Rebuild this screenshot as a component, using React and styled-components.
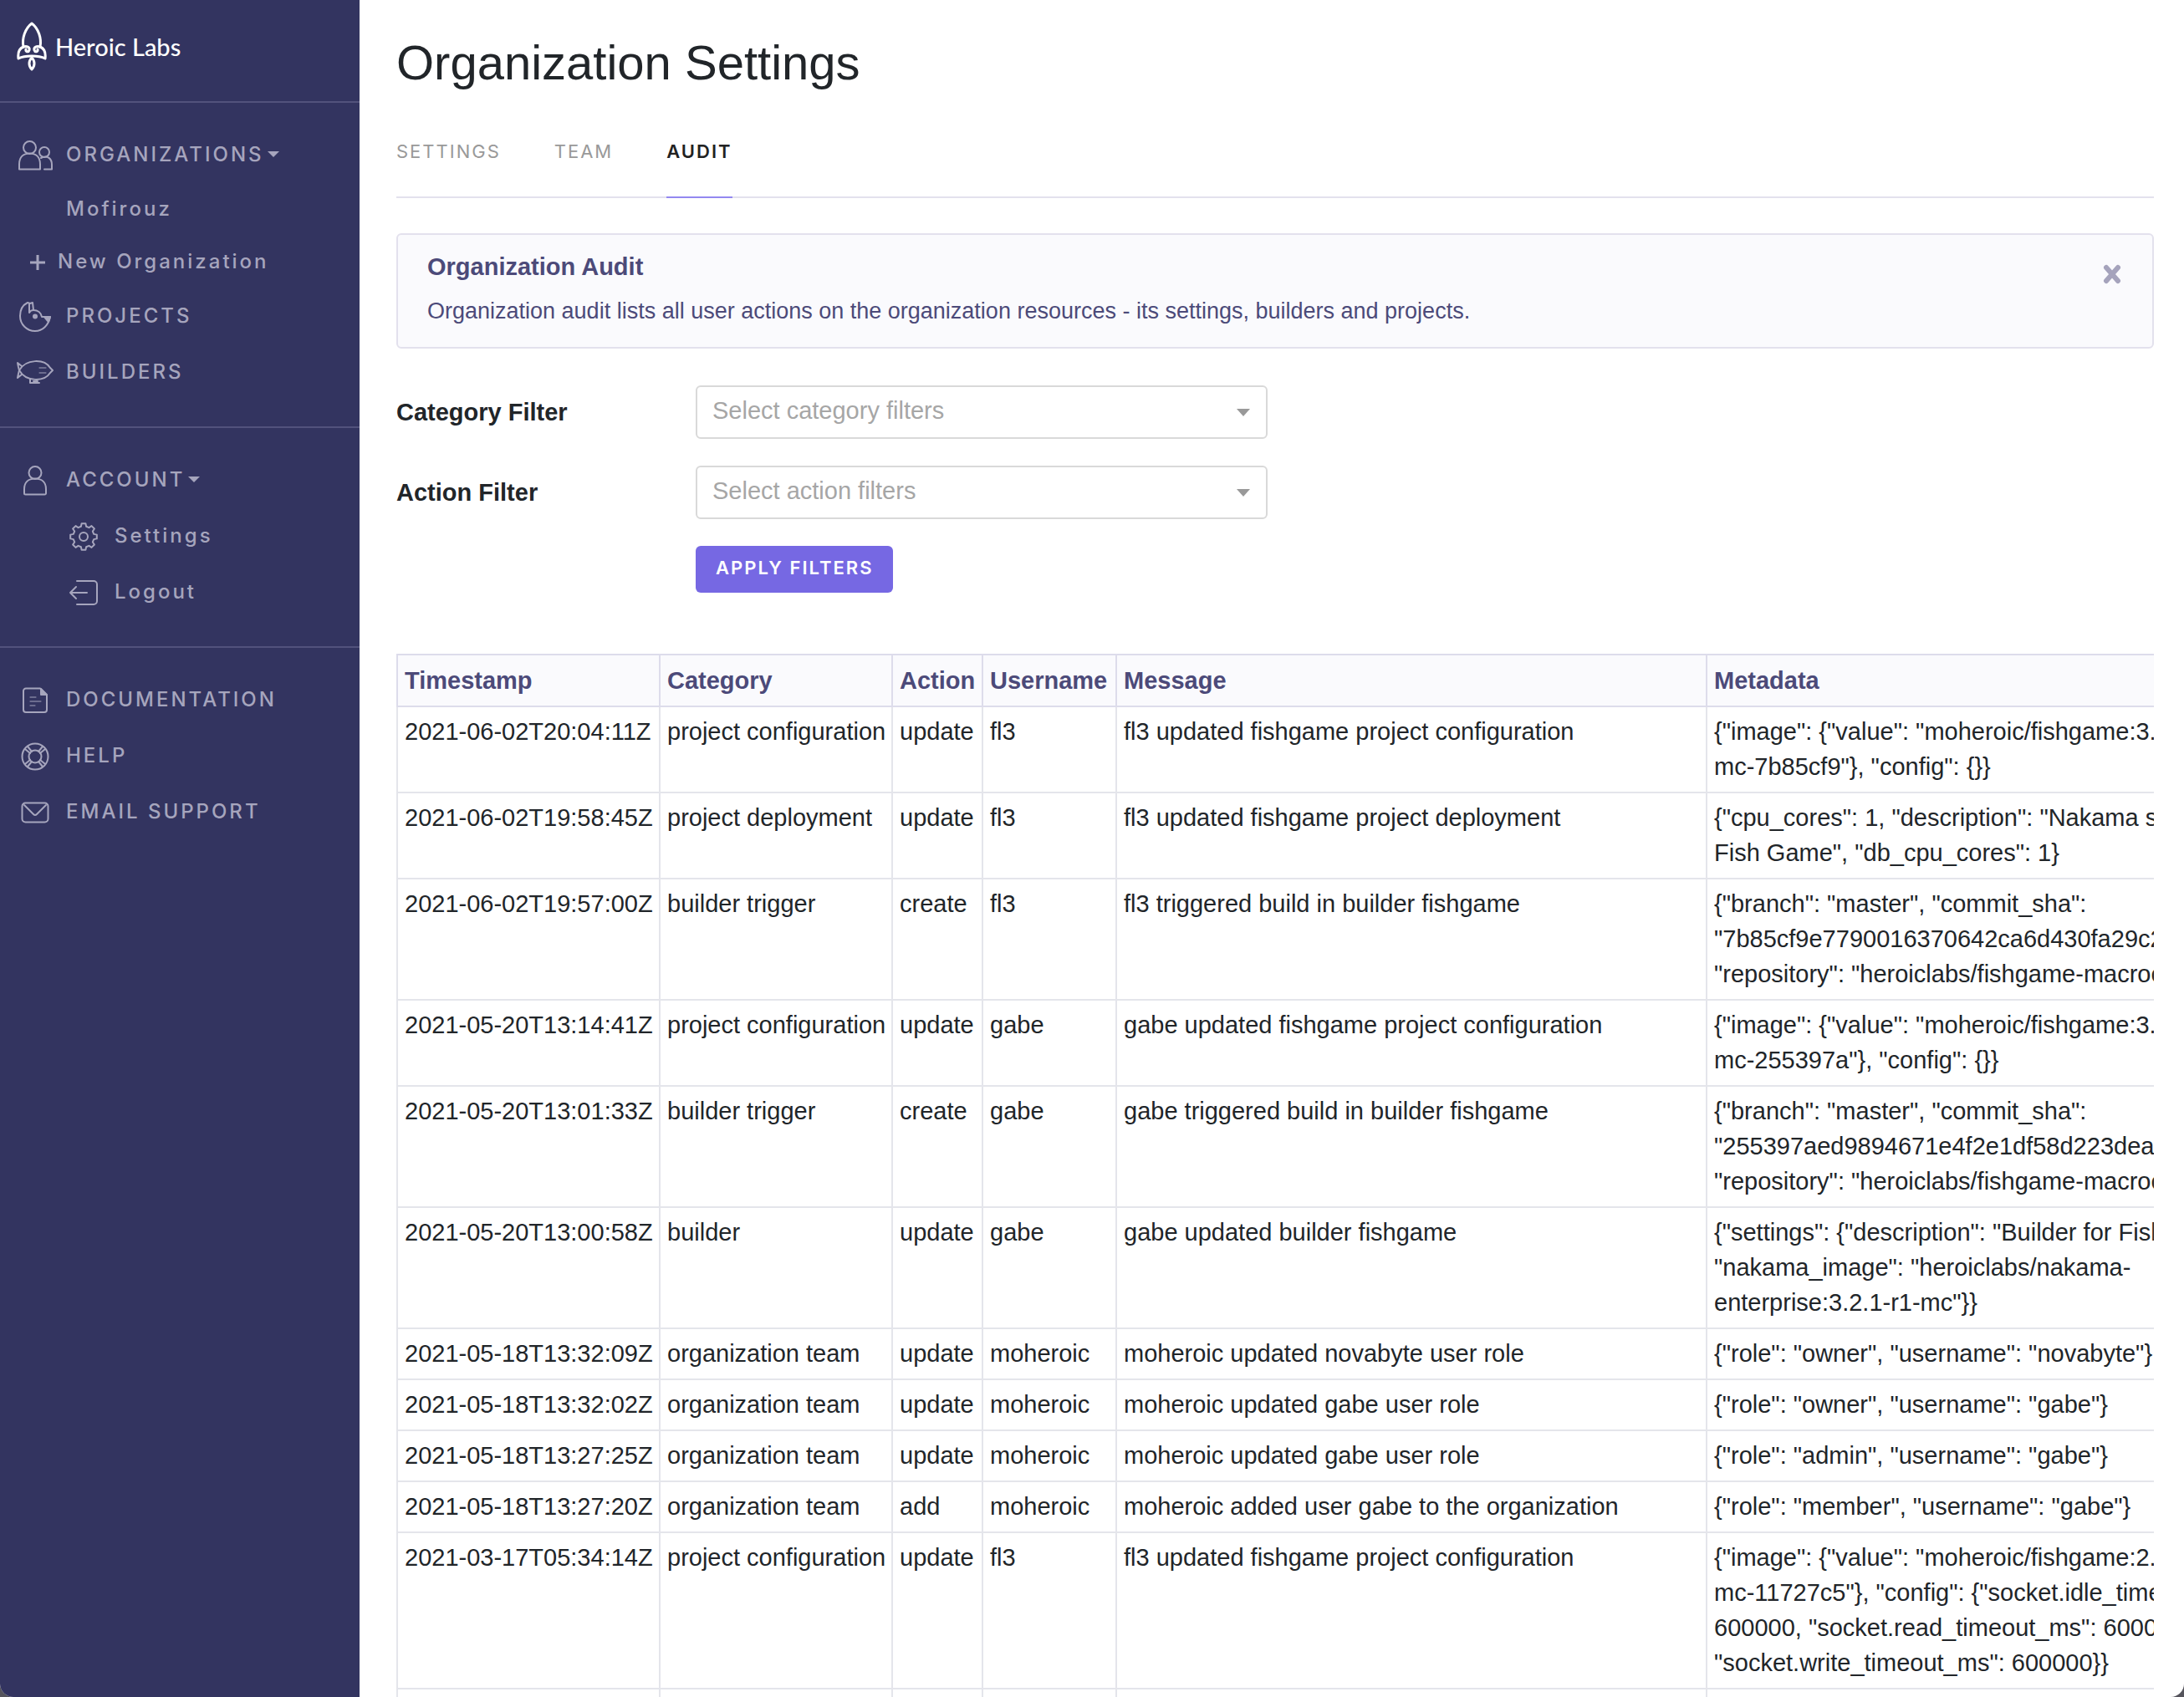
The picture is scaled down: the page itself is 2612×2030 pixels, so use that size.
import React from "react";
import styled, { createGlobalStyle } from "styled-components";

const sans = `"Liberation Sans", Arial, sans-serif`;
const display = `Inter, "Open Sans", sans-serif`;

const GlobalStyle = createGlobalStyle`
  *, *::before, *::after { box-sizing: border-box; }
  body {
    margin: 0;
    background: #55545c;
    color: #212529;
    font-family: ${sans};
    font-size: 29px;
    line-height: 42px;
  }
`;

const Shell = styled.div`
  display: flex;
  height: 100vh;
  overflow: hidden;
  background: #fff;
  border-radius: 0 0 16px 16px;
`;

/* ---------- sidebar ---------- */

const Sidebar = styled.aside`
  flex: 0 0 430px;
  background: #333460;
  color: #a6a5bd;
`;

const Brand = styled.a`
  display: flex;
  align-items: center;
  gap: 10px;
  height: 121px;
  padding: 0 20px 10px;
  color: #fff;
  font-family: Lato, ${sans};
  font-size: 29px;
  font-weight: 500;
  text-decoration: none;
`;

const Section = styled.nav`
  padding: 28px 0 32px;
  border-top: 2px solid #52527c;
`;

const NavLink = styled.a`
  display: flex;
  align-items: center;
  gap: 15px;
  height: ${(p) => (p.$compact ? 63 : 67)}px;
  padding-left: ${(p) => p.$indent || 20}px;
  color: inherit;
  font-family: ${display};
  font-size: 24px;
  font-weight: 500;
  letter-spacing: 3px;
  text-decoration: none;
`;

const IconSlot = styled.span`
  display: flex;
  align-items: center;
  justify-content: center;
  flex: 0 0 ${(p) => p.$width || 44}px;
  padding-top: 3px;
`;

const NavLabel = styled.span`
  display: flex;
  align-items: center;
  gap: 4px;
`;

const Caret = styled.span`
  border: 7px solid transparent;
  border-top-color: currentColor;
  border-bottom: 0;
`;

const Svg = styled.svg`
  display: block;
  flex: none;
  fill: none;
  stroke: currentColor;
  stroke-width: ${(p) => p.$stroke || 2};
  stroke-linecap: round;
  stroke-linejoin: round;
`;

const RocketLogo = () => (
  <Svg width="36" height="60" viewBox="0 0 36 60" $stroke={3} aria-hidden="true">
    <path d="M8 30C6 20 10 8 18 2c8 6 12 18 10 28" />
    <path d="M8 30c4-1 8 0 7 4-1 3-5 2-4-1" />
    <path d="M28 30c-4-1-8 0-7 4 1 3 5 2 4-1" />
    <path d="M8 30c-5 2-7 6-6 14 8-4 24-4 32 0 1-8-1-12-6-14" />
    <path d="M18 43c-4 4-4 10 0 14 4-4 4-10 0-14Z" />
  </Svg>
);

const PeopleIcon = () => (
  <Svg width="42" height="36" viewBox="0 0 42 36">
    <circle cx="14.500" cy="8.500" r="7.500" />
    <path d="M2 34.500v-6C2 20 7 15.500 14.500 15.500S27 20 27 28.500v6Z" />
    <circle cx="32" cy="14" r="6" />
    <path d="M28 21c8-4 13 1 13 8v5.500h-9" />
  </Svg>
);

const PersonIcon = () => (
  <Svg width="30" height="36" viewBox="0 0 30 36">
    <circle cx="15" cy="8.500" r="7.500" />
    <path d="M2 33v-5c0-8 5-12.500 13-12.500S28 20 28 28v5a1.500 1.500 0 0 1-1.500 1.500h-23A1.500 1.500 0 0 1 2 33Z" />
  </Svg>
);

const BirdIcon = () => (
  <Svg width="40" height="38" viewBox="0 0 40 38">
    <path d="M11 2C5 5 2 11 2 18c0 10 8 18 18 18 9 0 16-7 18-17H28c-1-5-5-8-10-8l-1-9-3 1-3-1" />
    <path d="M13 3v11c1-2 3-3 5-3" />
    <path d="M31 19h7l-2 6Z" fill="currentColor" />
    <circle cx="20" cy="18.500" r="2" fill="currentColor" />
  </Svg>
);

const AirshipIcon = () => (
  <Svg width="44" height="30" viewBox="0 0 44 30">
    <path d="M3 12C11-2 33-2 40 9l3 3-3 3C33 26 11 26 3 12Z" />
    <path d="M6 7 1 3l1 5 1 4-1 4-1 5 5-4" />
    <path d="M16 22v5h11M20 25h5" />
    <path d="M27 9h8M27 15h8" strokeWidth="1" />
  </Svg>
);

const gearPath = (() => {
  const points = [];
  for (let i = 0; i < 8; i += 1) {
    const mid = (i * Math.PI) / 4;
    [[-0.25, 12.6], [-0.15, 16], [0.15, 16], [0.25, 12.6]].forEach(([offset, radius]) => {
      const angle = mid + offset;
      points.push(`${(18 + radius * Math.sin(angle)).toFixed(2)} ${(18 - radius * Math.cos(angle)).toFixed(2)}`);
    });
  }
  return `M${points.join("L")}Z`;
})();

const GearIcon = () => (
  <Svg width="36" height="36" viewBox="0 0 36 36">
    <path d={gearPath} />
    <circle cx="18" cy="18" r="5" />
  </Svg>
);

const LogoutIcon = () => (
  <Svg width="36" height="32" viewBox="0 0 36 32">
    <path d="M10 2h20a4 4 0 0 1 4 4v20a4 4 0 0 1-4 4H10" />
    <path d="M22 16H2M9 9l-7 7 7 7" />
  </Svg>
);

const DocumentIcon = () => (
  <Svg width="32" height="32" viewBox="0 0 32 32">
    <path d="M5 1.500h17l8 8V27a3 3 0 0 1-3 3H5a3 3 0 0 1-3-3V4.500a3 3 0 0 1 3-3Z" />
    <path d="M23 2v7h7Z" fill="currentColor" />
    <path d="M10 12h7M10 17h13M10 22h6" strokeWidth="1" />
  </Svg>
);

const LifebuoyIcon = () => (
  <Svg width="34" height="34" viewBox="0 0 34 34">
    <circle cx="17" cy="17" r="15.500" />
    <circle cx="17" cy="17" r="7.500" />
    <path d="m5 8 6 5M8 5l5 6M29 8l-6 5M26 5l-5 6M5 26l6-5M8 29l5-6M29 26l-6-5M26 29l-5-6" />
  </Svg>
);

const MailIcon = () => (
  <Svg width="34" height="26" viewBox="0 0 34 26">
    <rect x="1.500" y="1.500" width="31" height="23" rx="4" />
    <path d="m4 4 11 11q2 2 4 0L30 4" />
  </Svg>
);

const PlusIcon = () => (
  <Svg width="18" height="18" viewBox="0 0 18 18" $stroke={3}>
    <path d="M9 0v18M0 9h18" strokeLinecap="butt" />
  </Svg>
);

function NavItem({ icon: Icon, slot, caret, children, ...rest }) {
  return (
    <NavLink href="#" {...rest}>
      {Icon && (
        <IconSlot $width={slot} aria-hidden="true">
          <Icon />
        </IconSlot>
      )}
      <NavLabel>
        {children}
        {caret && <Caret />}
      </NavLabel>
    </NavLink>
  );
}

/* ---------- main column ---------- */

const Main = styled.main`
  flex: 1;
  min-width: 0;
  overflow: hidden;
  padding: 40px 36px 0 44px;
`;

const Title = styled.h1`
  margin: 0;
  font-size: 58px;
  line-height: 70px;
  font-weight: 400;
`;

const Tabs = styled.nav`
  display: flex;
  gap: 64px;
  margin-top: 57px;
  border-bottom: 2px solid #e3e1ed;
`;

const Tab = styled.a`
  margin-bottom: -2px;
  padding-bottom: 40px;
  border-bottom: 2px solid ${(p) => (p.$active ? "#9388f0" : "transparent")};
  color: ${(p) => (p.$active ? "#222" : "#999")};
  font-family: ${display};
  font-size: 22px;
  line-height: 28px;
  font-weight: ${(p) => (p.$active ? 600 : 400)};
  letter-spacing: 2px;
  text-decoration: none;
`;

const Notice = styled.section`
  display: flex;
  justify-content: space-between;
  align-items: flex-start;
  margin-top: 42px;
  padding: 17px 32px 22px 35px;
  border: 2px solid #e3e1ed;
  border-radius: 6px;
  background: #fafafd;
  color: #4c4a79;
`;

const NoticeTitle = styled.h2`
  margin: 0 0 11px;
  font-size: 29px;
  line-height: 42px;
  font-weight: 700;
`;

const NoticeText = styled.p`
  margin: 0;
  font-size: 27px;
`;

const CloseButton = styled.button`
  display: flex;
  margin: 14px 0 0;
  padding: 4px;
  border: 0;
  background: none;
  color: #a5a3bc;
  cursor: pointer;
`;

const Filters = styled.form`
  display: grid;
  grid-template-columns: 358px minmax(0, 684px);
  row-gap: 32px;
  align-items: center;
  margin-top: 44px;
`;

const FilterLabel = styled.label`
  font-weight: 700;
`;

const SelectBox = styled.span`
  display: grid;
  align-items: center;

  & > * { grid-area: 1 / 1; }

  &::after {
    content: "";
    grid-area: 1 / 1;
    justify-self: end;
    margin-right: 21px;
    border: 8px solid transparent;
    border-top: 9px solid #999;
    border-bottom: 0;
    pointer-events: none;
  }
`;

const Select = styled.select`
  appearance: none;
  width: 100%;
  height: 64px;
  padding: 0 48px 4px 18px;
  border: 2px solid #d9d9d9;
  border-radius: 6px;
  background: #fff;
  color: #a6a6a6;
  font-family: ${sans};
  font-size: 29px;
`;

const ApplyButton = styled.button`
  grid-column: 2;
  justify-self: start;
  height: 56px;
  padding: 0 24px 4px;
  border: 0;
  border-radius: 6px;
  background: #7668e3;
  color: #fff;
  font-family: ${display};
  font-size: 22px;
  font-weight: 600;
  letter-spacing: 2px;
  cursor: pointer;
`;

const TableScroller = styled.div`
  margin-top: 73px;
  overflow-x: auto;
  scrollbar-width: none;
`;

const Table = styled.table`
  width: 2265px;
  table-layout: fixed;
  border-collapse: collapse;
`;

const HeadCell = styled.th`
  padding: 9px 8px;
  border: 2px solid #dddceb;
  background: #fafafd;
  color: #4c4a79;
  text-align: left;
  white-space: nowrap;
`;

const Cell = styled.td`
  padding: 8px 8px 9px;
  border: 2px solid #e4e5eb;
  vertical-align: top;
  white-space: pre;
`;

const columns = [
  ["Timestamp", 314],
  ["Category", 278],
  ["Action", 108],
  ["Username", 160],
  ["Message", 706],
  ["Metadata", 699],
];

const entries = [
  ["2021-06-02T20:04:11Z", "project configuration", "update", "fl3", "fl3 updated fishgame project configuration",
    `{"image": {"value": "moheroic/fishgame:3.2.1-r1-\nmc-7b85cf9"}, "config": {}}`],
  ["2021-06-02T19:58:45Z", "project deployment", "update", "fl3", "fl3 updated fishgame project deployment",
    `{"cpu_cores": 1, "description": "Nakama server for\nFish Game", "db_cpu_cores": 1}`],
  ["2021-06-02T19:57:00Z", "builder trigger", "create", "fl3", "fl3 triggered build in builder fishgame",
    `{"branch": "master", "commit_sha":\n"7b85cf9e7790016370642ca6d430fa29c2",\n"repository": "heroiclabs/fishgame-macrocosm"}`],
  ["2021-05-20T13:14:41Z", "project configuration", "update", "gabe", "gabe updated fishgame project configuration",
    `{"image": {"value": "moheroic/fishgame:3.2.1-r1-\nmc-255397a"}, "config": {}}`],
  ["2021-05-20T13:01:33Z", "builder trigger", "create", "gabe", "gabe triggered build in builder fishgame",
    `{"branch": "master", "commit_sha":\n"255397aed9894671e4f2e1df58d223dea9",\n"repository": "heroiclabs/fishgame-macrocosm"}`],
  ["2021-05-20T13:00:58Z", "builder", "update", "gabe", "gabe updated builder fishgame",
    `{"settings": {"description": "Builder for Fish Game",\n"nakama_image": "heroiclabs/nakama-\nenterprise:3.2.1-r1-mc"}}`],
  ["2021-05-18T13:32:09Z", "organization team", "update", "moheroic", "moheroic updated novabyte user role",
    `{"role": "owner", "username": "novabyte"}`],
  ["2021-05-18T13:32:02Z", "organization team", "update", "moheroic", "moheroic updated gabe user role",
    `{"role": "owner", "username": "gabe"}`],
  ["2021-05-18T13:27:25Z", "organization team", "update", "moheroic", "moheroic updated gabe user role",
    `{"role": "admin", "username": "gabe"}`],
  ["2021-05-18T13:27:20Z", "organization team", "add", "moheroic", "moheroic added user gabe to the organization",
    `{"role": "member", "username": "gabe"}`],
  ["2021-03-17T05:34:14Z", "project configuration", "update", "fl3", "fl3 updated fishgame project configuration",
    `{"image": {"value": "moheroic/fishgame:2.15.0-r1-\nmc-11727c5"}, "config": {"socket.idle_timeout_ms":\n600000, "socket.read_timeout_ms": 600000,\n"socket.write_timeout_ms": 600000}}`],
  ["", "", "", "", "", ""],
];

function Filter({ id, label, placeholder }) {
  return (
    <>
      <FilterLabel htmlFor={id}>{label}</FilterLabel>
      <SelectBox>
        <Select id={id} defaultValue="">
          <option value="">{placeholder}</option>
        </Select>
      </SelectBox>
    </>
  );
}

export default function App() {
  return (
    <>
      <GlobalStyle />
      <Shell>
        <Sidebar>
          <Brand href="#">
            <RocketLogo />
            Heroic Labs
          </Brand>
          <Section aria-label="Workspace">
            <NavItem icon={PeopleIcon} caret>ORGANIZATIONS</NavItem>
            <NavItem $compact $indent={79}>Mofirouz</NavItem>
            <NavItem icon={PlusIcon} slot={18} $compact $indent={36}>New Organization</NavItem>
            <NavItem icon={BirdIcon}>PROJECTS</NavItem>
            <NavItem icon={AirshipIcon}>BUILDERS</NavItem>
          </Section>
          <Section aria-label="Account">
            <NavItem icon={PersonIcon} caret>ACCOUNT</NavItem>
            <NavItem icon={GearIcon} $indent={78}>Settings</NavItem>
            <NavItem icon={LogoutIcon} $indent={78}>Logout</NavItem>
          </Section>
          <Section aria-label="Support">
            <NavItem icon={DocumentIcon}>DOCUMENTATION</NavItem>
            <NavItem icon={LifebuoyIcon}>HELP</NavItem>
            <NavItem icon={MailIcon}>EMAIL SUPPORT</NavItem>
          </Section>
        </Sidebar>

        <Main>
          <Title>Organization Settings</Title>
          <Tabs aria-label="Organization">
            <Tab href="#">SETTINGS</Tab>
            <Tab href="#">TEAM</Tab>
            <Tab href="#" $active aria-current="page">AUDIT</Tab>
          </Tabs>

          <Notice>
            <div>
              <NoticeTitle>Organization Audit</NoticeTitle>
              <NoticeText>
                Organization audit lists all user actions on the organization resources - its settings, builders and projects.
              </NoticeText>
            </div>
            <CloseButton type="button" aria-label="Dismiss">
              <Svg width="24" height="24" viewBox="0 0 24 24" $stroke={6}>
                <path d="m5 4 14 16M19 4 5 20" />
              </Svg>
            </CloseButton>
          </Notice>

          <Filters onSubmit={(event) => event.preventDefault()}>
            <Filter id="category-filter" label="Category Filter" placeholder="Select category filters" />
            <Filter id="action-filter" label="Action Filter" placeholder="Select action filters" />
            <ApplyButton type="submit">APPLY FILTERS</ApplyButton>
          </Filters>

          <TableScroller>
            <Table>
              <colgroup>
                {columns.map(([name, width]) => (
                  <col key={name} width={width} />
                ))}
              </colgroup>
              <thead>
                <tr>
                  {columns.map(([name]) => (
                    <HeadCell key={name} scope="col">{name}</HeadCell>
                  ))}
                </tr>
              </thead>
              <tbody>
                {entries.map((entry, row) => (
                  <tr key={row}>
                    {entry.map((value, column) => (
                      <Cell key={column}>{value}</Cell>
                    ))}
                  </tr>
                ))}
              </tbody>
            </Table>
          </TableScroller>
        </Main>
      </Shell>
    </>
  );
}
